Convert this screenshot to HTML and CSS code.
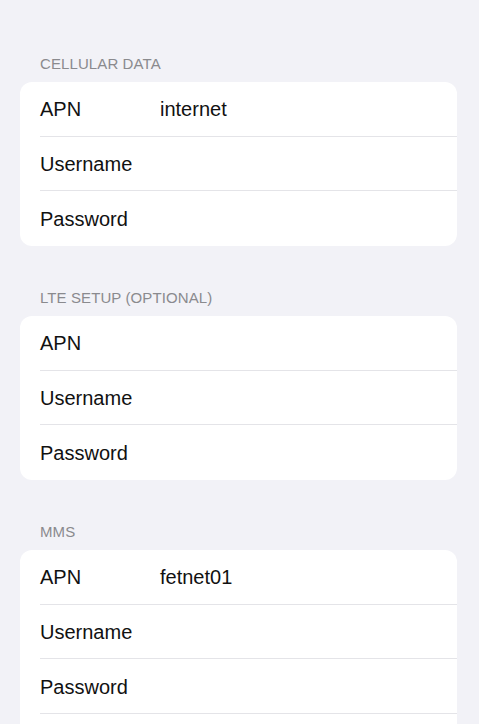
FILE: index.html
```html
<!DOCTYPE html>
<html>
<head>
<meta charset="utf-8">
<link rel="stylesheet" href="styles.css">
</head>
<body>
<div class="page">
  <section class="group">
    <div class="group-header">CELLULAR DATA</div>
    <div class="card">
      <div class="row"><span class="label">APN</span><span class="value">internet</span></div>
      <div class="row"><span class="label">Username</span><span class="value"></span></div>
      <div class="row"><span class="label">Password</span><span class="value"></span></div>
    </div>
  </section>
  <section class="group">
    <div class="group-header">LTE SETUP (OPTIONAL)</div>
    <div class="card">
      <div class="row"><span class="label">APN</span><span class="value"></span></div>
      <div class="row"><span class="label">Username</span><span class="value"></span></div>
      <div class="row"><span class="label">Password</span><span class="value"></span></div>
    </div>
  </section>
  <section class="group">
    <div class="group-header">MMS</div>
    <div class="card">
      <div class="row"><span class="label">APN</span><span class="value">fetnet01</span></div>
      <div class="row"><span class="label">Username</span><span class="value"></span></div>
      <div class="row"><span class="label">Password</span><span class="value"></span></div>
      <div class="row"><span class="label"></span><span class="value"></span></div>
    </div>
  </section>
</div>
</body>
</html>
```

FILE: styles.css
```css
html, body {
  margin: 0;
  padding: 0;
  background: #f2f2f7;
  font-family: "Liberation Sans", Arial, sans-serif;
  color: #000;
}
.page {
  padding-top: 55px;
  display: flex;
  flex-direction: column;
  gap: 43px;
}
.group {
  display: flex;
  flex-direction: column;
}
.group-header {
  padding-left: 40px;
  font-size: 15px;
  line-height: 18px;
  height: 18px;
  margin-bottom: 9px;
  color: #8a8a8e;
  letter-spacing: 0.1px;
}
.card {
  margin: 0 22px 0 20px;
  background: #fff;
  border-radius: 12px;
  overflow: hidden;
}
.row {
  display: flex;
  align-items: center;
  height: 54.67px;
  box-sizing: border-box;
  padding-top: 2px;
  margin-left: 20px;
  border-bottom: 1px solid #e4e4e8;
  font-size: 20px;
  color: #111;
}
.row:last-child {
  border-bottom: none;
}
.label {
  width: 120px;
  flex: none;
}
.value {
  flex: 1;
}
```
